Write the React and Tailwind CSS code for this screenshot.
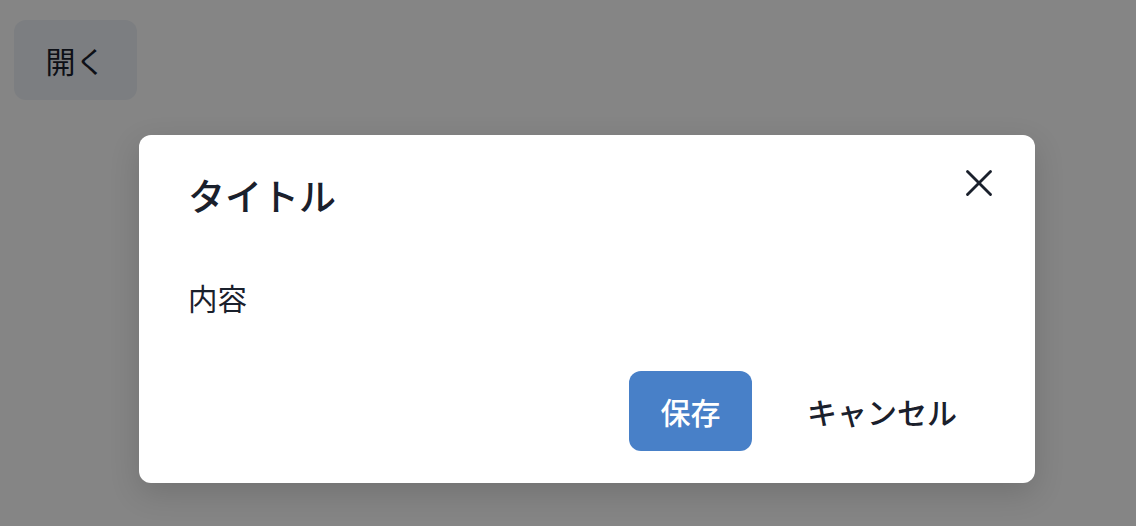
import { X } from 'lucide-react';

const font = { fontFamily: '"Noto Sans CJK JP", "Noto Sans", sans-serif' };

export default function App() {
  return (
    <div className="relative h-screen w-full overflow-hidden bg-white text-[#1a202c]" style={font}>
      {/* Trigger */}
      <div className="pl-[14px] pt-[20px]">
        <button className="flex h-[80px] w-[123px] items-center justify-center rounded-[12px] bg-[#edf2f7] text-[30px] font-normal">
          開く
        </button>
      </div>

      {/* Overlay */}
      <div className="absolute inset-0 bg-black/[0.48]" />

      {/* Modal */}
      <div className="absolute inset-0 flex justify-start pl-[139px] pt-[135px]">
        <div className="relative flex h-[348px] w-[896px] flex-col rounded-[12px] bg-white pl-[49px] pr-[48px] shadow-[0_10px_30px_rgba(0,0,0,0.15)]">
          <button className="absolute right-[24px] top-[16px] flex h-[64px] w-[64px] items-center justify-center rounded-[12px]">
            <X size={46} strokeWidth={1.5} className="text-[#1a202c]" />
          </button>
          <h2 className="pt-[36px] text-[37px] font-medium leading-[48px]">タイトル</h2>
          <p className="mt-[54px] text-[29.5px] font-normal leading-[48px]">内容</p>
          <div className="mt-[50px] flex justify-end">
            <button className="mr-[25px] flex h-[80px] w-[123px] items-center justify-center rounded-[12px] bg-[#4880c8] text-[30px] font-medium text-white">
              保存
            </button>
            <button className="flex h-[80px] items-center justify-center rounded-[12px] px-[30px] text-[30px] font-medium">
              キャンセル
            </button>
          </div>
        </div>
      </div>
    </div>
  );
}
